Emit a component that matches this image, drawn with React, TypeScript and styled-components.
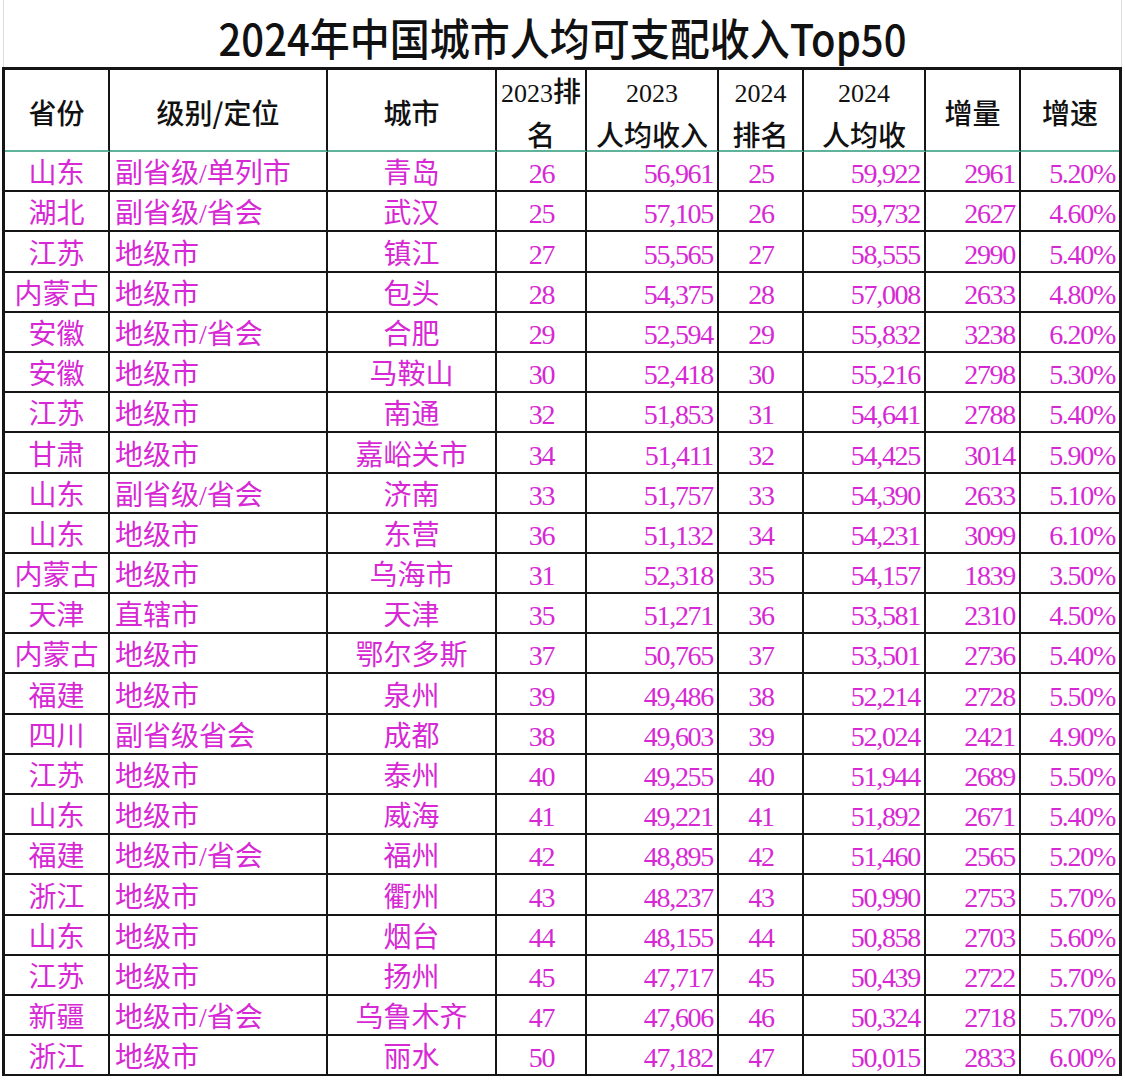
import React from "react";
import styled, { createGlobalStyle } from "styled-components";

const GlobalStyle = createGlobalStyle`
  html, body {
    margin: 0;
    padding: 0;
    background: #ffffff;
  }
  body {
    font-family: "Liberation Serif", "Noto Sans CJK SC", serif;
  }
`;

const Page = styled.div`
  width: 1125px;
  height: 1080px;
  overflow: hidden;
  background: #ffffff;
`;

const TitleBar = styled.div`
  height: 67px;
  margin: 0 3px;
  border-left: 1px solid #dcdcdc;
  border-right: 1px solid #dcdcdc;
  display: flex;
  align-items: center;
  justify-content: center;
  padding-top: 6px;
  box-sizing: border-box;
`;

const TitleText = styled.h1`
  margin: 0;
  font-family: "Noto Sans CJK SC", sans-serif;
  font-weight: 500;
  font-size: 40px;
  line-height: 48px;
  color: #111111;
  transform: scaleY(1.1);
`;

const Sheet = styled.div`
  margin-left: 2px;
  width: 1114px;
  border: 3px solid #151515;
  border-bottom: none;
  display: grid;
  grid-template-columns: 105px 218px 169px 90px 132px 85px 122px 95px 98px;
  grid-template-rows: 82px repeat(23, 40.2px);
`;

type Align = "left" | "center" | "right";

const justify = (a: Align) =>
  a === "left" ? "flex-start" : a === "right" ? "flex-end" : "center";

const HeadCell = styled.div<{ $last?: boolean }>`
  box-sizing: border-box;
  border-right: ${(p) => (p.$last ? "none" : "2px solid #151515")};
  border-bottom: 2px solid #5fb39b;
  display: flex;
  flex-direction: column;
  align-items: center;
  justify-content: center;
  padding-top: 4px;
  font-size: 28px;
  line-height: 41px;
  color: #111111;
  white-space: nowrap;
`;

const HeadLine = styled.span`
  display: block;
  font-family: "Noto Sans CJK SC", sans-serif;
  font-weight: 500;
`;

const Year = styled.span`
  font-family: "Liberation Serif", serif;
  font-weight: 400;
  font-size: 26px;
`;

const Cell = styled.div<{ $align: Align; $num?: boolean; $last?: boolean }>`
  box-sizing: border-box;
  border-right: ${(p) => (p.$last ? "none" : "2px solid #151515")};
  border-bottom: 2px solid #151515;
  display: flex;
  align-items: flex-end;
  justify-content: ${(p) => justify(p.$align)};
  padding: 0 ${(p) => (p.$num ? "4px" : "5px")} 0 5px;
  font-size: 28px;
  letter-spacing: ${(p) => (p.$num ? "-1.3px" : "0")};
  line-height: 32px;
  color: #d629d4;
  white-space: nowrap;
  overflow: hidden;
`;

type Row = [string, string, string, string, string, string, string, string, string];

const rows: Row[] = [
  ["山东", "副省级/单列市", "青岛", "26", "56,961", "25", "59,922", "2961", "5.20%"],
  ["湖北", "副省级/省会", "武汉", "25", "57,105", "26", "59,732", "2627", "4.60%"],
  ["江苏", "地级市", "镇江", "27", "55,565", "27", "58,555", "2990", "5.40%"],
  ["内蒙古", "地级市", "包头", "28", "54,375", "28", "57,008", "2633", "4.80%"],
  ["安徽", "地级市/省会", "合肥", "29", "52,594", "29", "55,832", "3238", "6.20%"],
  ["安徽", "地级市", "马鞍山", "30", "52,418", "30", "55,216", "2798", "5.30%"],
  ["江苏", "地级市", "南通", "32", "51,853", "31", "54,641", "2788", "5.40%"],
  ["甘肃", "地级市", "嘉峪关市", "34", "51,411", "32", "54,425", "3014", "5.90%"],
  ["山东", "副省级/省会", "济南", "33", "51,757", "33", "54,390", "2633", "5.10%"],
  ["山东", "地级市", "东营", "36", "51,132", "34", "54,231", "3099", "6.10%"],
  ["内蒙古", "地级市", "乌海市", "31", "52,318", "35", "54,157", "1839", "3.50%"],
  ["天津", "直辖市", "天津", "35", "51,271", "36", "53,581", "2310", "4.50%"],
  ["内蒙古", "地级市", "鄂尔多斯", "37", "50,765", "37", "53,501", "2736", "5.40%"],
  ["福建", "地级市", "泉州", "39", "49,486", "38", "52,214", "2728", "5.50%"],
  ["四川", "副省级省会", "成都", "38", "49,603", "39", "52,024", "2421", "4.90%"],
  ["江苏", "地级市", "泰州", "40", "49,255", "40", "51,944", "2689", "5.50%"],
  ["山东", "地级市", "威海", "41", "49,221", "41", "51,892", "2671", "5.40%"],
  ["福建", "地级市/省会", "福州", "42", "48,895", "42", "51,460", "2565", "5.20%"],
  ["浙江", "地级市", "衢州", "43", "48,237", "43", "50,990", "2753", "5.70%"],
  ["山东", "地级市", "烟台", "44", "48,155", "44", "50,858", "2703", "5.60%"],
  ["江苏", "地级市", "扬州", "45", "47,717", "45", "50,439", "2722", "5.70%"],
  ["新疆", "地级市/省会", "乌鲁木齐", "47", "47,606", "46", "50,324", "2718", "5.70%"],
  ["浙江", "地级市", "丽水", "50", "47,182", "47", "50,015", "2833", "6.00%"],
];

const columns: { align: Align; num?: boolean }[] = [
  { align: "center" },
  { align: "left" },
  { align: "center" },
  { align: "center", num: true },
  { align: "right", num: true },
  { align: "center", num: true },
  { align: "right", num: true },
  { align: "right", num: true },
  { align: "right", num: true },
];

export default function App() {
  return (
    <Page>
      <GlobalStyle />
      <TitleBar>
        <TitleText>2024年中国城市人均可支配收入Top50</TitleText>
      </TitleBar>
      <Sheet>
        <HeadCell>
          <HeadLine>省份</HeadLine>
        </HeadCell>
        <HeadCell>
          <HeadLine>级别/定位</HeadLine>
        </HeadCell>
        <HeadCell>
          <HeadLine>城市</HeadLine>
        </HeadCell>
        <HeadCell>
          <HeadLine>
            <Year>2023</Year>排
          </HeadLine>
          <HeadLine>名</HeadLine>
        </HeadCell>
        <HeadCell>
          <HeadLine>
            <Year>2023</Year>
          </HeadLine>
          <HeadLine>人均收入</HeadLine>
        </HeadCell>
        <HeadCell>
          <HeadLine>
            <Year>2024</Year>
          </HeadLine>
          <HeadLine>排名</HeadLine>
        </HeadCell>
        <HeadCell>
          <HeadLine>
            <Year>2024</Year>
          </HeadLine>
          <HeadLine>人均收</HeadLine>
        </HeadCell>
        <HeadCell>
          <HeadLine>增量</HeadLine>
        </HeadCell>
        <HeadCell $last>
          <HeadLine>增速</HeadLine>
        </HeadCell>
        {rows.map((row, r) =>
          row.map((value, c) => (
            <Cell
              key={`${r}-${c}`}
              $align={columns[c].align}
              $num={columns[c].num}
              $last={c === 8}
            >
              {value}
            </Cell>
          ))
        )}
      </Sheet>
    </Page>
  );
}
